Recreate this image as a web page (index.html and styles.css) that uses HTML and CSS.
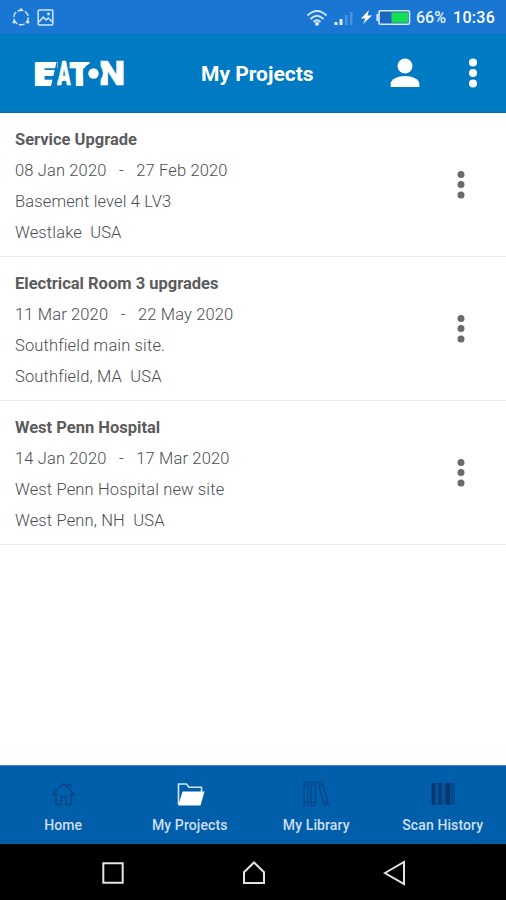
FILE: index.html
```html
<!DOCTYPE html>
<html lang="en">
<head>
<meta charset="utf-8">
<title>My Projects</title>
<link rel="stylesheet" href="styles.css">
</head>
<body>
<div class="status">
  <svg class="status-left" width="44" height="20" viewBox="0 0 44 20" fill="none" stroke="#d3e6fb" stroke-width="1.5">
    <circle cx="9" cy="9.500" r="7.300" stroke-dasharray="6 1.650"/>
    <g fill="#d3e6fb" stroke="none"><circle cx="9" cy="1.800" r="1.500"/><circle cx="2" cy="14" r="1.500"/><circle cx="16" cy="14" r="1.500"/></g>
    <rect x="26.200" y="2" width="14.600" height="15" rx="1"/>
    <path d="M27 14l4.200-5 3 3 2-2 4.300 4"/><circle cx="36.500" cy="6" r=".7" fill="#d3e6fb"/>
  </svg>
  <svg class="status-right" width="106" height="20" viewBox="0 0 106 20">
    <g fill="none" stroke="#d3e6fb" stroke-width="1.800">
      <path d="M1.500 7.500Q11-1.500 20.500 7.500M4.500 11Q11 4.500 17.500 11M7.500 14Q11 10.500 14.500 14"/>
    </g>
    <circle cx="11" cy="15.800" r="2" fill="#e4f0fd"/>
    <g fill="#e4f0fd"><path d="M28.500 14h3v3h-3zM33.500 11h3v6h-3z"/><path d="M39 7h2.500v10H39zM44 4h2.500v13H44z" opacity=".25"/></g>
    <path d="M63 2l-8 8.500h4.500L57 16l9-8.500h-4.500z" fill="#fff"/>
    <rect x="73" y="2.700" width="30.500" height="13.600" rx="1.500" fill="#1d66c0" stroke="#d8eafa" stroke-width="1.600"/>
    <path d="M71.300 6v7" stroke="#d8eafa" stroke-width="1.800"/>
    <path d="M85.500 4.500h16.500v10.200H85.500z" fill="#13df55"/>
  </svg>
  <span class="percent">66%</span>
  <span class="clock">10:36</span>
</div>
<header class="header">
  <div class="logo">
    <svg width="92" height="26" viewBox="0 0 92 26" role="img" aria-label="Eaton">
      <g class="logo-type">
        <text class="heavy" x="0" y="24.500" textLength="22.500" lengthAdjust="spacingAndGlyphs">E</text>
        <text x="23.500" y="25" textLength="13" lengthAdjust="spacingAndGlyphs">A</text>
        <text x="65" y="25" textLength="26" lengthAdjust="spacingAndGlyphs">N</text>
        <text class="heavy" x="36" y="24.500" textLength="19" lengthAdjust="spacingAndGlyphs">T</text>
      </g>
      <path d="M23 0v26h-6z" class="cut"/>
      <circle cx="59" cy="13" r="10" class="cut"/>
      <circle cx="59.500" cy="13.500" r="5.200" fill="#fff"/>
    </svg>
  </div>
  <h1 class="title">My Projects</h1>
  <svg class="user" width="30" height="30" viewBox="0 0 30 30" fill="#fff"><circle cx="15" cy="8" r="7.500"/><path d="M.7 29v-3.500C.7 21.500 8 18 15 18s14.300 3.500 14.300 7.500V29z"/></svg>
  <svg class="more" width="10" height="30" viewBox="0 0 10 30" fill="#fff"><circle cx="5" cy="4.500" r="4"/><circle cx="5" cy="15" r="4"/><circle cx="5" cy="25.500" r="4"/></svg>
</header>
<main class="list">
  <article class="project">
    <div class="info">
      <h2>Service Upgrade</h2>
      <p>08 Jan 2020   -   27 Feb 2020</p>
      <p>Basement level 4 LV3</p>
      <p>Westlake  USA</p>
    </div>
    <svg class="dots" width="10" height="30" viewBox="0 0 10 30"><circle cx="5" cy="4.500" r="3.500"/><circle cx="5" cy="14.500" r="3.500"/><circle cx="5" cy="25" r="3.500"/></svg>
  </article>
  <article class="project">
    <div class="info">
      <h2>Electrical Room 3 upgrades</h2>
      <p>11 Mar 2020   -   22 May 2020</p>
      <p>Southfield main site.</p>
      <p>Southfield, MA  USA</p>
    </div>
    <svg class="dots" width="10" height="30" viewBox="0 0 10 30"><circle cx="5" cy="4.500" r="3.500"/><circle cx="5" cy="14.500" r="3.500"/><circle cx="5" cy="25" r="3.500"/></svg>
  </article>
  <article class="project">
    <div class="info">
      <h2>West Penn Hospital</h2>
      <p>14 Jan 2020   -   17 Mar 2020</p>
      <p>West Penn Hospital new site</p>
      <p>West Penn, NH  USA</p>
    </div>
    <svg class="dots" width="10" height="30" viewBox="0 0 10 30"><circle cx="5" cy="4.500" r="3.500"/><circle cx="5" cy="14.500" r="3.500"/><circle cx="5" cy="25" r="3.500"/></svg>
  </article>
</main>
<nav class="tabs">
  <a class="tab">
    <svg width="30" height="28" viewBox="0 0 30 28" fill="none" stroke="#044384" stroke-width="1.300"><path d="M4.500 14.500L15.500 3.500l4 4V5h3v5.500l4 4-1.500 1.300-2-1.800v10.500h-5v-8h-5v8H8V14l-2 1.800z"/></svg>
    <span>Home</span>
  </a>
  <a class="tab">
    <svg width="30" height="28" viewBox="0 0 30 28"><path d="M3.500 24.500V4h8l2.500 3.200h12.500V12" fill="none" stroke="#d5e5f7" stroke-width="1.600"/><path d="M7.500 11.500h22L25.500 25.500H3.300z" fill="#fff"/></svg>
    <span>My Projects</span>
  </a>
  <a class="tab">
    <svg width="30" height="28" viewBox="0 0 30 28" fill="none" stroke="#044384" stroke-width="1.200"><path d="M3 2h4v23.500H3zM10 2h4.500v23.500H10zM17 3l4-1 6.500 22-4 1.500zM3 5h4M10 5h4.500M18 6l4-1M3 22.500h4M10 22.500h4.500M22.600 22.500l4-1.300"/></svg>
    <span>My Library</span>
  </a>
  <a class="tab">
    <svg width="30" height="28" viewBox="0 0 30 28"><path d="M3 3h24v22H3z" fill="#044b91"/><path d="M4 3h3v22H4zM11 3h2v22h-2zM18 3h4v22h-4z" fill="#05376e"/><path d="M8.500 3v22M15.500 3v22" stroke="#0755a0" stroke-width="1"/></svg>
    <span>Scan History</span>
  </a>
</nav>
<div class="system">
  <svg width="26" height="28" viewBox="0 0 26 28"><path d="M3.300 4.300h19.400v19.400H3.300z"/></svg>
  <svg width="26" height="28" viewBox="0 0 26 28"><path d="M3 24V13.200L13 3.500l10 9.700V24z"/></svg>
  <svg width="26" height="28" viewBox="0 0 26 28"><path d="M3 14L22 3v22z"/></svg>
</div>
</body>
</html>
```
FILE: styles.css
```css
* { box-sizing: border-box; }
body {
  margin: 0;
  height: 900px;
  display: flex;
  flex-direction: column;
  background: #fff;
  font-family: Roboto, "Liberation Sans", sans-serif;
  overflow: hidden;
}
h1, h2, p { margin: 0; }
svg { display: block; flex: none; }
.status {
  height: 34px;
  flex: none;
  display: flex;
  align-items: center;
  padding: 1px 10px 0 12px;
  background: #1976d2;
  color: #e8f2fd;
  font-size: 16px;
  font-weight: 500;
  white-space: nowrap;
}
.status-right { margin-left: auto; }
.percent { width: 31px; margin-left: 4px; }
.clock { width: 43px; margin-left: 6px; color: #fff; letter-spacing: .3px; }
.header {
  height: 79px;
  flex: none;
  display: flex;
  align-items: center;
  padding: 0 28px 0 34px;
  background: #007bc3;
  border-bottom: 1px solid #0870b5;
  color: #fff;
}
.logo svg { overflow: visible; }
.logo-type {
  fill: #fff;
  stroke: #fff;
  stroke-width: .7px;
  font: 900 33px Roboto, sans-serif;
}
.logo-type .heavy { stroke-width: 2px; font-size: 32px; }
.cut { fill: #007bc3; }
.title {
  width: 114px;
  margin-left: 75px;
  padding-top: 2px;
  font-size: 21px;
  font-weight: 700;
  white-space: nowrap;
}
.user { margin-left: 75px; }
.more { margin-left: auto; }
.list { flex: 1; background: #fff; }
.project {
  height: 144px;
  display: flex;
  align-items: center;
  justify-content: space-between;
  padding: 0 40px 0 15px;
  border-bottom: 1px solid #ececec;
}
.info {
  padding-top: 2px;
  color: #4a4e52;
  font-size: 16.5px;
  font-weight: 300;
  line-height: 31px;
}
.info p { white-space: pre; letter-spacing: .14px; }
.info h2 { font-size: 16.5px; font-weight: 700; color: #5c5c5c; }
.dots { fill: #666b70; }
.tabs {
  height: 79px;
  flex: none;
  display: grid;
  grid-template-columns: repeat(4, 1fr);
  background: #005eab;
  border-top: 1px solid #3d82bd;
}
.tab {
  display: flex;
  flex-direction: column;
  align-items: center;
  padding-top: 14px;
  color: #cfdff2;
  font-size: 14px;
  font-weight: 500;
  line-height: 18px;
  letter-spacing: .1px;
}
.tab span { margin-top: 8px; }
.system {
  height: 56px;
  flex: none;
  display: flex;
  justify-content: center;
  align-items: center;
  gap: 115px;
  padding: 1px 0 0 1px;
  background: #000;
}
.system svg { fill: none; stroke: #e3e3e3; stroke-width: 2px; }
```
